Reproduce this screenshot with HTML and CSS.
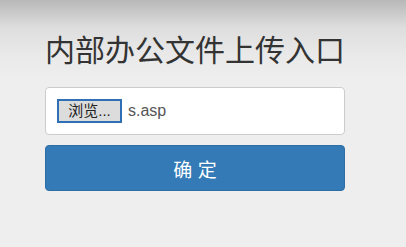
FILE: index.html
```html
<!DOCTYPE html>
<html lang="zh-CN">
<head>
    <meta charset="UTF-8">
    <meta name="viewport" content="width=device-width, initial-scale=1.0">
    <title>内部办公文件上传入口</title>
    <link rel="stylesheet" href="styles.css">
</head>
<body>
    <div class="upload-box">
        <h1 class="upload-title">内部办公文件上传入口</h1>
        <div class="file-field">
            <span class="browse-button">浏览...</span>
            <span class="file-name">s.asp</span>
        </div>
        <button class="submit-button">确 定</button>
    </div>
</body>
</html>
```

FILE: styles.css
```css
body {
    margin: 0;
    height: 247px;
    font-family: "Liberation Sans", "Noto Sans CJK SC", sans-serif;
    background: linear-gradient(#b8b8b8 0, #dedede 28px, #e9e9e9 55px, #eeeeee 80px, #eeeeee);
    color: #333;
}
.upload-box {
    width: 300px;
    margin-left: 45px;
    padding-top: 31px;
}
.upload-title {
    margin: 0 0 16px 0;
    font-size: 30px;
    font-weight: normal;
    line-height: 40px;
    color: #333;
    white-space: nowrap;
}
.file-field {
    display: flex;
    align-items: center;
    gap: 6px;
    height: 46px;
    padding: 0 11px;
    background-color: #fff;
    border: 1px solid #ccc;
    border-radius: 4px;
}
.browse-button {
    box-sizing: border-box;
    width: 65px;
    height: 24px;
    line-height: 20px;
    text-align: center;
    font-size: 15px;
    color: #222;
    background-color: #dcdcdc;
    border: 2px solid #2f6fb5;
}
.file-name {
    font-size: 16px;
    color: #555;
}
.submit-button {
    display: block;
    width: 300px;
    height: 46px;
    margin-top: 10px;
    padding: 0;
    font-family: "Liberation Sans", "Noto Sans CJK SC", sans-serif;
    font-size: 19px;
    color: #fff;
    background-color: #337ab7;
    border: 1px solid #2e6da4;
    border-radius: 4px;
}
```
